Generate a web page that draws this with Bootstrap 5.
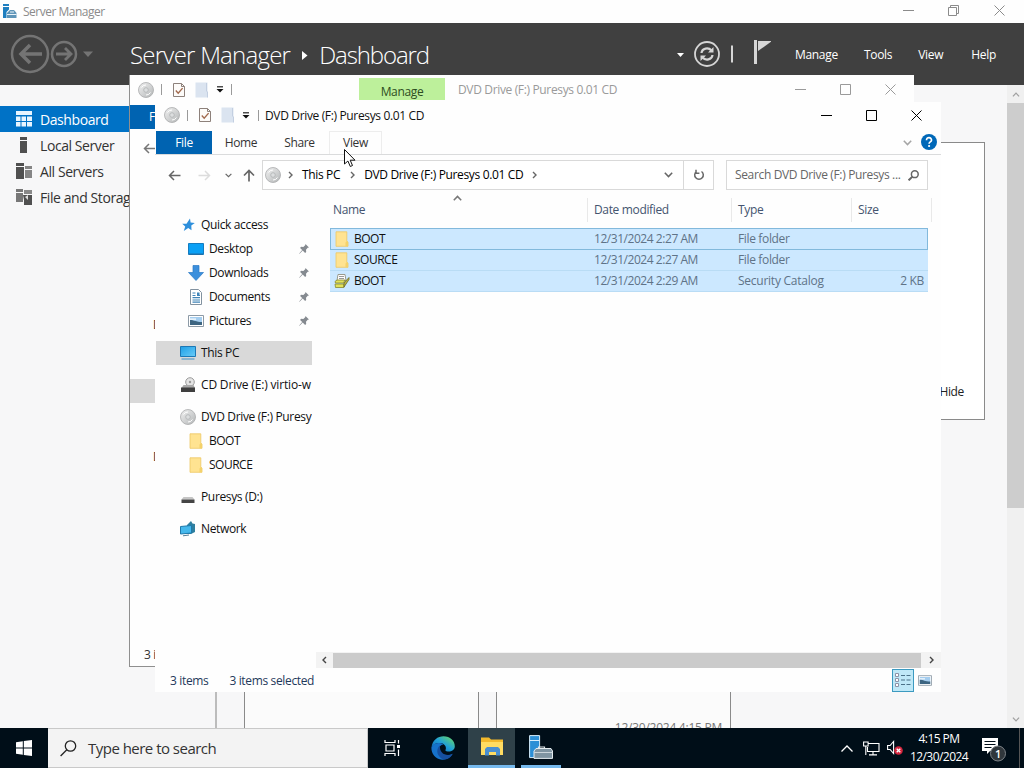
<!DOCTYPE html>
<html lang="en">
<head>
  <meta charset="UTF-8" />
  <meta name="viewport" content="width=device-width, initial-scale=1.0"/>
  <title>Server Manager</title>

  <!-- Bootstrap CSS -->
  <link href="https://cdn.jsdelivr.net/npm/bootstrap@5.3.0/dist/css/bootstrap.min.css" rel="stylesheet">

  <!-- Custom CSS -->
  <style>
    body {
      width: 1024px;
      height: 768px;
      overflow: hidden;
      font-family: "Open Sans", "Noto Sans", sans-serif;
      font-size: 12px;
      line-height: 16px;
      letter-spacing: -0.35px;
      color: #1b1b1b;
      background: #f7f7f8;
      white-space: nowrap;
    }
    svg { display: block; flex: none; }

    /* Server Manager */
    .sm-title { height: 23px; background: #fefefe; color: #8b8b8b; padding-left: 2px; letter-spacing: -0.5px; }
    .sm-controls { padding: 0 19px 3px 0; }
    .sm-header { height: 62px; background: #404040; color: #fff; padding: 0 28px 0 8px; }
    .sm-crumb {
      font-family: "Open Sans", sans-serif;
      font-weight: 300;
      font-size: 24px;
      letter-spacing: -0.9px;
      line-height: 32px;
      margin-left: 36px;
      padding-top: 2px;
    }
    .sm-menu { gap: 26px; margin-left: 24px; font-weight: 500; padding-top: 2px; letter-spacing: -0.3px; }
    .sm-body { height: 643px; }
    .sm-side { width: 215px; padding-top: 21px; font-size: 14px; letter-spacing: -0.42px; color: #333; }
    .side-item { height: 26px; padding-left: 15px; gap: 7px; }
    .side-item span { padding-top: 2px; }
    .side-item.active { background: #0072c6; color: #fff; }
    .sm-main { padding-top: 57px; }
    .welcome { width: 770px; height: 278px; background: #fff; border: 1px solid #8a8a8a; padding: 0 20px 19px 0; color: #222; }
    .tile { width: 235px; height: 60px; border: solid #8a8a8a; border-width: 0 1px; background: #fbfbfb; color: #777; }
    .tile span { margin-bottom: -8px; letter-spacing: -.25px; }
    .tile-edge { width: 29px; border-left: 2px solid #bcbcbc; }
    .sm-scroll { width: 17px; background: #f0f0f0; }
    .sm-thumb { height: 405px; background: #cdcdcd; margin-bottom: auto; }
    .scroll-arrow { height: 18px; color: #a0a0a0; }
    .flip-y { transform: scaleY(-1); }
    .flip-x { transform: scaleX(-1); }

    /* Explorer windows */
    .win { position: absolute; background: #fefefe; overflow: hidden; }
    .win-back { left: 129px; top: 75px; width: 785px; height: 592px; border: solid #8f8f8f; border-width: 0 0 1px 1px; color: #9a9a9a; }
    .win-front { left: 155px; top: 102px; width: 786px; height: 590px; }
    .back-bar { height: 29px; }
    .bar-sep { width: 1px; height: 11px; background: #9a9a9a; }
    .manage-tab { width: 86px; height: 22px; background: #bdf09b; color: #2d4d22; margin: 3px 13px 0 127px; padding-top: 6px; }
    .caption { height: 29px; padding: 0 0 3px 9px; color: #111; }
    .controls { gap: 34px; padding-right: 19px; }
    .win-back .controls { padding-right: 18px; }
    .ribbon { height: 24px; border-bottom: 1px solid #dadbdc; padding-left: 1px; }
    .ribbon > span { height: 23px; line-height: 24px; text-align: center; color: #333; }
    .file-tab { background: #0063b1; }
    .ribbon > .file-tab { color: #fff; }
    .ribbon > .view-tab { border: 1px solid #ededed; border-bottom: 0; line-height: 22px; }
    .nav-row { height: 40px; padding: 0 13px; color: #666; }
    .box { height: 30px; border: 1px solid #d9d9d9; background: #fff; }
    .tree { width: 157px; padding: 18px 0 0 1px; overflow: hidden; }
    .tree-item { height: 24px; padding-left: 24px; gap: 5px; color: #111; }
    .tree-item.sub { padding-left: 32px; }
    .tree-item.gap-top { margin-top: 8px; }
    .tree-item.current { background: #d9d9d9; }
    .tree-item .pin { margin-left: auto; margin-right: 3px; }
    .files { width: 629px; }
    .sort-mark { height: 3px; padding-left: 141px; color: #777; }
    .col-head { height: 30px; color: #44546f; padding-left: 15px; }
    .col-head > div { height: 24px; line-height: 24px; border-right: 1px solid #e9e9e9; padding-left: 6px; }
    .c-name { width: 261px; }
    .c-date { width: 144px; }
    .c-type { width: 120px; }
    .file-row { width: 598px; height: 21px; margin-left: 18px; background: #cce8ff; color: #5f7387; border-bottom: 1px solid #b9dcf5; }
    .file-row:first-child { border: 1px solid #82b9dc; height: 22px; }
    .file-row:first-child > .c-name { margin-left: -1px; }
    .file-row .c-name { color: #111; padding-left: 4px; gap: 4px; width: 258px; letter-spacing: -0.5px; }
    .file-row .c-date, .file-row .c-type { padding-left: 6px; }
    .file-row .c-date { letter-spacing: -0.45px; }
    .file-row .c-size { width: 76px; padding-right: 4px; }
    .hbar { height: 16px; width: 625px; background: #f3f3f3; margin-left: auto; color: #444; }
    .hthumb { width: 588px; height: 15px; background: #cbcbcb; }
    .status { height: 24px; padding: 0 9px 0 15px; color: #1e395b; }
    .status span { padding-top: 2px; }
    .view-on { width: 22px; height: 23px; background: #bfe8f7; border: 1px solid #3c9ac0; }

    /* Taskbar */
    .taskbar { position: absolute; left: 0; top: 728px; width: 1024px; height: 40px; background: #000e18; color: #fff; }
    .search { width: 320px; height: 40px; background: #f3f3f3; color: #333; font-size: 15px; letter-spacing: -0.52px; padding-left: 12px; gap: 11px; border: 1px solid #c9c9c9; border-left: 0; }
    .app { width: 48px; height: 40px; }
    .app-open { border-bottom: 3px solid #76b9ed; }
    .app-current { background: #2f4149; }
    .clock { width: 64px; line-height: 18px; letter-spacing: -0.55px; margin-left: 4px; }
    .show-desktop { width: 5px; height: 40px; border-left: 1px solid #555; }
    .pointer { position: absolute; left: 343px; top: 148px; }
  </style>
</head>
<body>

  <!-- Shared icons -->
  <svg width="0" height="0" class="position-absolute">
    <defs>
      <linearGradient id="gDisc" x1="0" y1="0" x2="1" y2="1">
        <stop offset="0" stop-color="#f1f1f1"/><stop offset="1" stop-color="#b4b7b8"/>
      </linearGradient>
      <linearGradient id="gEdge" x1="0" y1="1" x2="1" y2="0">
        <stop offset="0" stop-color="#0f5fb5"/><stop offset=".5" stop-color="#1f9fd8"/><stop offset="1" stop-color="#6fe05a"/>
      </linearGradient>
      <linearGradient id="gScreen" x1="0" y1="0" x2="1" y2="1">
        <stop offset="0" stop-color="#1e9fe6"/><stop offset="1" stop-color="#6accf8"/>
      </linearGradient>
    </defs>
    <symbol id="disc" viewBox="0 0 16 16">
      <circle cx="8" cy="8" r="7.5" fill="url(#gDisc)" stroke="#a9abac" stroke-width=".8"/>
      <path d="M3.5 5.5A5 5 0 0 1 8 3M12.5 10.5A5 5 0 0 1 8 13" fill="none" stroke="#fff" stroke-width="1"/>
      <circle cx="8" cy="8" r="2.3" fill="#dcdedf" stroke="#b0b3b4" stroke-width=".8"/>
    </symbol>
    <symbol id="props" viewBox="0 0 14 16">
      <path d="M1.5 1.5h8l3 3v10h-11z" fill="#fdfbf9" stroke="#8d817b"/>
      <path d="M9.5 1.5v3h3" fill="none" stroke="#8d817b"/>
      <path d="M3.8 8.5l2.4 2.6 4.4-5" fill="none" stroke="#a1694d" stroke-width="1.4"/>
    </symbol>
    <symbol id="newfolder" viewBox="0 0 13 16">
      <path d="M.5.5h12v15H.5z" fill="#dbe4f0"/><path d="M11.5 1v8l1 1v5.5" fill="none" stroke="#c3cfe1"/>
    </symbol>
    <symbol id="qat" viewBox="0 0 8 7">
      <path d="M1 .8h6" stroke="#222" stroke-width="1.2"/><path d="M.5 3h7L4 6.5z" fill="#111"/>
    </symbol>
    <symbol id="folder" viewBox="0 0 13 16">
      <path d="M.5.8h10.800v9l1.200 1.500v4H.5z" fill="#ffe391" stroke="#edc863" stroke-width=".8"/>
      <path d="M11.300 1v9l-1.300 1.500v3.800h2.500v-4l-1.200-1.500z" fill="#f4d26a"/>
    </symbol>
    <symbol id="pin" viewBox="0 0 10 10">
      <path d="M6.500 0L10 3.500l-1.300.3-1.700 1.900.2 2.300-1.100.9L3.700 6.500 .6 9.800.2 9.400 3.200 6 1.100 3.900l.9-1.100 2.300.2 1.900-1.700z" fill="#858a90"/>
    </symbol>
    <symbol id="photo" viewBox="0 0 16 12">
      <path d="M.5.5h15v11H.5z" fill="#fff" stroke="#8d9aa6"/>
      <path d="M2 2h12v8H2z" fill="#a4cdef"/><path d="M2 5c4 0 6 2 12 2v3H2z" fill="#3d6581"/><path d="M2 3.500h6v1.200H2z" fill="#fff"/>
    </symbol>
    <symbol id="min" viewBox="0 0 11 11"><path d="M0 5.500h11" stroke="currentColor"/></symbol>
    <symbol id="max" viewBox="0 0 11 11"><path d="M.5.5h10v10H.5z" fill="none" stroke="currentColor"/></symbol>
    <symbol id="close" viewBox="0 0 11 11"><path d="M.5.5l10 10M10.500.5l-10 10" stroke="currentColor"/></symbol>
    <symbol id="chev" viewBox="0 0 5 8"><path d="M1 1l3 3-3 3" fill="none" stroke="currentColor" stroke-width="1.400"/></symbol>
    <symbol id="chevdown" viewBox="0 0 9 6"><path d="M.8.8l3.700 3.800L8.200.8" fill="none" stroke="currentColor" stroke-width="1.500"/></symbol>
    <symbol id="back" viewBox="0 0 13 11"><path d="M12.500 5.500H1.500M6 1L1.500 5.500 6 10" fill="none" stroke="currentColor" stroke-width="1.500"/></symbol>
    <symbol id="server" viewBox="0 0 24 24">
      <path d="M.6.6h10v22H.6z" fill="#2c8fd6" stroke="#d8eefc"/><path d="M.6 5.500h10" stroke="#d8eefc"/>
      <path d="M9.500 14v-2h6v2" fill="none" stroke="#dfe6ea" stroke-width="1.200"/>
      <path d="M5 16l2-2.500h15l1.500 2.500v7.400H5z" fill="#8095a2" stroke="#e4ebef"/><path d="M5 17.500h18.500" stroke="#cbd5db"/>
    </symbol>
  </svg>

  <!-- Server Manager title bar -->
  <div class="sm-title d-flex align-items-center">
    <svg width="15" height="15" viewBox="0 0 15 15">
      <path d="M1 0h6v2H1zM1 3h6v2.500L4.500 8v6H1z" fill="#1f7fc0"/>
      <path d="M6 8l2-2h4l2.500 3v5H5V9z" fill="#5f95b8"/><path d="M5 10.500h9.500M8 8h4" stroke="#e9f2f8"/>
    </svg>
    <span style="margin-left: 6px">Server Manager</span>
    <div class="sm-controls d-flex align-items-center ms-auto">
      <svg width="11" height="11"><use href="#min"/></svg>
      <svg width="11" height="11" viewBox="0 0 11 11" style="margin: 0 35px 0 34px" fill="none" stroke="currentColor"><path d="M.5 2.500h8v8h-8zM2.500 2.500v-2h8v8h-2"/></svg>
      <svg width="11" height="11"><use href="#close"/></svg>
    </div>
  </div>

  <!-- Server Manager header -->
  <div class="sm-header d-flex align-items-center">
    <svg width="86" height="40" viewBox="0 0 86 40" fill="none" stroke="#747474">
      <circle cx="22" cy="20" r="18" stroke-width="2.500"/>
      <path d="M34 20H13M22 11l-9 9 9 9" stroke-width="3.500"/>
      <circle cx="56" cy="20" r="12" stroke-width="2.500"/>
      <path d="M48 20h14M57 14l6 6-6 6" stroke-width="2.800"/>
      <path d="M75 17.500h10L80 23z" fill="#747474" stroke="none"/>
    </svg>
    <div class="sm-crumb d-flex align-items-center">
      <span style="letter-spacing: -0.75px">Server Manager</span>
      <svg width="6" height="9" viewBox="0 0 6 9" style="margin: 0 11px 0 12px"><path d="M0 0l5.500 4.500L0 9z" fill="#fff"/></svg>
      <span style="letter-spacing: -1.1px">Dashboard</span>
    </div>
    <svg width="96" height="30" viewBox="0 0 96 30" class="ms-auto" fill="none" stroke="#d6d6d6">
      <path d="M2 14h7l-3.500 4z" fill="#fff" stroke="none"/>
      <circle cx="32" cy="15" r="12" stroke-width="1.800"/>
      <path d="M26.500 14c.5-5 7-6 10-2.500M37.500 16c-.5 5-7 6-10 2.500" stroke-width="2.200"/>
      <path d="M38.500 8v5.500H33zM25.500 22v-5.500H31z" fill="#d6d6d6" stroke="none"/>
      <path d="M57 6.500v17" stroke-width="2"/>
      <path d="M80.500 1v24" stroke-width="3"/>
      <path d="M83 2h14L83 12z" fill="#d6d6d6" stroke="none"/>
    </svg>
    <div class="sm-menu d-flex">
      <span>Manage</span><span>Tools</span><span>View</span><span style="margin-left: 2px">Help</span>
    </div>
  </div>

  <!-- Server Manager body -->
  <div class="sm-body d-flex">
    <div class="sm-side flex-shrink-0">
      <div class="side-item active d-flex align-items-center">
        <svg width="18" height="16" viewBox="0 0 18 16"><path d="M1 0h16v4H1zM1 5.500h4.500V10H1zM6.500 5.500H11V10H6.500zM12 5.500h5V10h-5zM1 11h4.500v4.500H1zM6.500 11H11v4.500H6.500zM12 11h5v4.500h-5z" fill="#e8f5ff"/></svg>
        <span>Dashboard</span>
      </div>
      <div class="side-item d-flex align-items-center">
        <svg width="18" height="16" viewBox="0 0 18 16"><path d="M5 0h7v3H5zM5 4h7v12H5z" fill="#505050"/></svg>
        <span>Local Server</span>
      </div>
      <div class="side-item d-flex align-items-center">
        <svg width="18" height="16" viewBox="0 0 18 16"><path d="M1 0h8v3H1zM1 4h8v12H1z" fill="#505050"/><path d="M10 3h7v3h-7zM10 7h7v8h-7z" fill="#858585"/></svg>
        <span>All Servers</span>
      </div>
      <div class="side-item d-flex align-items-center">
        <svg width="18" height="16" viewBox="0 0 18 16"><path d="M1 0h7v3H1zM1 4h7v9H1z" fill="#777"/><path d="M9 1h8v4H9z" fill="#888"/><path d="M8 6h9v10H9v-5z" fill="#505050"/><path d="M10 8l3-2v5z" fill="#ddd"/></svg>
        <span>File and Storage Services</span>
      </div>
    </div>
    <div class="sm-main flex-grow-1 d-flex flex-column">
      <div class="welcome d-flex align-items-end justify-content-end"><span>Hide</span></div>
      <div class="d-flex mt-auto">
        <div class="tile-edge"></div>
        <div class="tile"></div>
        <div style="width: 17px"></div>
        <div class="tile d-flex align-items-end justify-content-end pe-2"><span>12/30/2024 4:15 PM</span></div>
      </div>
    </div>
    <div class="sm-scroll d-flex flex-column align-items-center">
      <div class="scroll-arrow d-flex align-items-center"><svg width="8" height="5" class="flip-y"><use href="#chevdown"/></svg></div>
      <div class="sm-thumb w-100"></div>
      <div class="scroll-arrow d-flex align-items-center"><svg width="8" height="5"><use href="#chevdown"/></svg></div>
    </div>
  </div>

  <!-- Explorer window behind -->
  <div class="win win-back d-flex flex-column">
    <div class="back-bar d-flex align-items-center flex-shrink-0">
      <svg width="16" height="16" style="margin-left: 8px"><use href="#disc"/></svg>
      <div class="bar-sep" style="margin: 0 10px 0 7px"></div>
      <svg width="14" height="16"><use href="#props"/></svg>
      <svg width="13" height="16" style="margin: 0 8px 0 9px"><use href="#newfolder"/></svg>
      <svg width="8" height="7"><use href="#qat"/></svg>
      <div class="bar-sep" style="margin-left: 7px"></div>
      <div class="manage-tab text-center align-self-start">Manage</div>
      <span>DVD Drive (F:) Puresys 0.01 CD</span>
      <div class="controls d-flex ms-auto">
        <svg width="11" height="11"><use href="#min"/></svg>
        <svg width="11" height="11"><use href="#max"/></svg>
        <svg width="11" height="11"><use href="#close"/></svg>
      </div>
    </div>
    <div class="file-tab text-white" style="width: 56px; height: 24px; padding: 4px 0 0 19px; margin-top: 1px">File</div>
    <div style="padding: 14px 0 0 13px; color: #777"><svg width="13" height="11"><use href="#back"/></svg></div>
    <div style="padding: 163px 0 0 23px; color: #333">Documents</div>
    <div style="background: #d9d9d9; height: 24px; width: 26px; margin-top: 46px"></div>
    <div style="padding: 46px 0 0 23px; color: #333">DVD Drive</div>
    <div class="mt-auto" style="padding: 0 0 3px 14px; color: #333">3 items</div>
  </div>

  <!-- Explorer window in front -->
  <div class="win win-front d-flex flex-column">
    <div class="caption d-flex align-items-center flex-shrink-0">
      <svg width="16" height="16"><use href="#disc"/></svg>
      <div class="bar-sep" style="margin: 0 10px 0 7px"></div>
      <svg width="14" height="16"><use href="#props"/></svg>
      <svg width="13" height="16" style="margin: 0 8px 0 9px"><use href="#newfolder"/></svg>
      <svg width="8" height="7"><use href="#qat"/></svg>
      <div class="bar-sep" style="margin: 0 6px 0 8px"></div>
      <span style="padding-top: 2px">DVD Drive (F:) Puresys 0.01 CD</span>
      <div class="controls d-flex ms-auto text-black">
        <svg width="11" height="11"><use href="#min"/></svg>
        <svg width="11" height="11"><use href="#max"/></svg>
        <svg width="11" height="11"><use href="#close"/></svg>
      </div>
    </div>
    <div class="ribbon d-flex flex-shrink-0">
      <span class="file-tab" style="width: 56px">File</span>
      <span style="width: 58px">Home</span>
      <span style="width: 59px">Share</span>
      <span class="view-tab" style="width: 53px">View</span>
      <div class="d-flex align-items-center ms-auto pe-1" style="color: #a5a5a5">
        <svg width="9" height="6"><use href="#chevdown"/></svg>
        <svg width="16" height="16" viewBox="0 0 16 16" style="margin: 0 0 2px 9px">
          <circle cx="8" cy="8" r="8" fill="#0068b8"/>
          <path d="M5.500 6.200c0-3.600 5.200-3.300 5 0-.1 1.800-2.400 1.700-2.400 3.600" fill="none" stroke="#fff" stroke-width="1.700"/><circle cx="8.100" cy="12" r="1.100" fill="#fff"/>
        </svg>
      </div>
    </div>
    <div class="nav-row d-flex align-items-center flex-shrink-0">
      <svg width="13" height="11"><use href="#back"/></svg>
      <svg width="13" height="11" class="flip-x" style="margin-left: 17px; color: #dcdcdc"><use href="#back"/></svg>
      <svg width="7" height="5" style="margin-left: 14px"><use href="#chevdown"/></svg>
      <svg width="12" height="13" viewBox="0 0 12 13" style="margin-left: 11px" fill="none" stroke="currentColor" stroke-width="1.700"><path d="M6 12.500V1.500M1 6.500l5-5 5 5"/></svg>
      <div class="box d-flex align-items-center" style="width: 452px; margin-left: 7px; padding-left: 2px">
        <svg width="16" height="16"><use href="#disc"/></svg>
        <svg width="5" height="8" style="margin: 0 9px 0 7px"><use href="#chev"/></svg>
        <span class="text-black">This PC</span>
        <svg width="5" height="8" style="margin: 0 9px 0 10px"><use href="#chev"/></svg>
        <span class="text-black">DVD Drive (F:) Puresys 0.01 CD</span>
        <svg width="5" height="8" style="margin-left: 9px"><use href="#chev"/></svg>
        <svg width="9" height="6" class="ms-auto" style="margin-right: 10px"><use href="#chevdown"/></svg>
        <div class="h-100 d-flex align-items-center justify-content-center" style="width: 30px; border-left: 1px solid #d9d9d9">
          <svg width="12" height="12" viewBox="0 0 12 12" fill="none" stroke="currentColor" stroke-width="1.500"><path d="M8.500 2.500a4.300 4.300 0 1 1-5 0M3 .8v3.400h3.400"/></svg>
        </div>
      </div>
      <div class="box d-flex align-items-center px-2" style="width: 202px; margin-left: 12px">
        <span>Search DVD Drive (F:) Puresys ...</span>
        <svg width="11" height="11" viewBox="0 0 11 11" class="ms-auto" fill="none" stroke="currentColor"><circle cx="6.800" cy="4.200" r="3.400" stroke-width="1.500"/><path d="M4.400 6.600L.6 10.400" stroke-width="2"/></svg>
      </div>
    </div>

    <div class="d-flex flex-grow-1">
      <!-- Navigation tree -->
      <div class="tree flex-shrink-0">
        <div class="tree-item d-flex align-items-center">
          <svg width="16" height="14" viewBox="0 0 16 14"><path d="M10 .5l.6 4 4.200.5-3.500 2.500.2 4.700-3.300-2.200-4.400 3 1.400-4.500-3-2.700h4.300z" fill="#2e8fdb"/></svg>
          <span>Quick access</span>
        </div>
        <div class="tree-item sub d-flex align-items-center">
          <svg width="16" height="14" viewBox="0 0 16 14"><path d="M.5 1.500h15v11H.5z" fill="#0aa0f5" stroke="#147cc0"/><path d="M1 11.500h14v1.500H1z" fill="#1f6fa8"/></svg>
          <span>Desktop</span><svg width="10" height="10" class="pin"><use href="#pin"/></svg>
        </div>
        <div class="tree-item sub d-flex align-items-center">
          <svg width="16" height="16" viewBox="0 0 16 16"><path d="M5 .5h6v7h4.500L8 15.500.5 7.500H5z" fill="#3b8fdc" stroke="#2a78c4" stroke-width=".7"/></svg>
          <span>Downloads</span><svg width="10" height="10" class="pin"><use href="#pin"/></svg>
        </div>
        <div class="tree-item sub d-flex align-items-center">
          <svg width="16" height="16" viewBox="0 0 16 16"><path d="M2.500.5h8l3 3v12h-11z" fill="#fff" stroke="#8292a0"/><path d="M4.500 4h3M4.500 6.500h3M9 6.500h3M4.500 8.700h7.500M4.500 11h7.500M4.500 13.200h7.500" stroke="#3f84b8" stroke-width="1.200"/><path d="M9 3.500h2.500V6H9z" fill="#3f84b8"/></svg>
          <span>Documents</span><svg width="10" height="10" class="pin"><use href="#pin"/></svg>
        </div>
        <div class="tree-item sub d-flex align-items-center">
          <svg width="16" height="12"><use href="#photo"/></svg>
          <span>Pictures</span><svg width="10" height="10" class="pin"><use href="#pin"/></svg>
        </div>
        <div class="tree-item gap-top current d-flex align-items-center">
          <svg width="16" height="14" viewBox="0 0 16 14"><path d="M.5.5h15v10H.5z" fill="url(#gScreen)" stroke="#1d78b5"/><path d="M1.500 12.500h13v1h-13z" fill="#3b8fc4"/></svg>
          <span>This PC</span>
        </div>
        <div class="tree-item gap-top d-flex align-items-center">
          <svg width="16" height="16" viewBox="0 0 16 16"><circle cx="10" cy="5" r="4.300" fill="#e4e4e4" stroke="#9c9c9c"/><circle cx="10" cy="5" r="1.200" fill="#999"/><path d="M3.500 8h10l1.500 3H1.500z" fill="#a9a9a9"/><path d="M1 10.500h14V15H1z" fill="#3f3f3f"/></svg>
          <span style="letter-spacing: -0.17px">CD Drive (E:) virtio-w</span>
        </div>
        <div class="tree-item gap-top d-flex align-items-center">
          <svg width="16" height="16"><use href="#disc"/></svg>
          <span>DVD Drive (F:) Puresy</span>
        </div>
        <div class="tree-item sub d-flex align-items-center">
          <svg width="16" height="16"><use href="#folder"/></svg>
          <span style="letter-spacing: -0.5px">BOOT</span>
        </div>
        <div class="tree-item sub d-flex align-items-center">
          <svg width="16" height="16"><use href="#folder"/></svg>
          <span style="letter-spacing: -0.5px">SOURCE</span>
        </div>
        <div class="tree-item gap-top d-flex align-items-center">
          <svg width="16" height="16" viewBox="0 0 16 16"><path d="M3.500 8h9l2 2.500h-13z" fill="#c5c5c5"/><path d="M1.500 10.500h13V14h-13z" fill="#444"/></svg>
          <span>Puresys (D:)</span>
        </div>
        <div class="tree-item gap-top d-flex align-items-center">
          <svg width="16" height="16" viewBox="0 0 16 16"><path d="M7 4l4-4 1.500 2.500L15 3v8l-4 2H7z" fill="#2f7f9f"/><path d="M.5 5.500l11-1v7.500l-11 1z" fill="#45b8ec" stroke="#1f79ab"/><path d="M3 14.800l6-.8" stroke="#557f98"/></svg>
          <span>Network</span>
        </div>
      </div>

      <!-- File list -->
      <div class="files">
        <div class="sort-mark"><svg width="9" height="6" class="flip-y"><use href="#chevdown"/></svg></div>
        <div class="col-head d-flex">
          <div class="c-name">Name</div>
          <div class="c-date">Date modified</div>
          <div class="c-type">Type</div>
          <div style="width: 80px">Size</div>
        </div>
        <div>
          <div class="file-row d-flex align-items-center">
            <div class="c-name d-flex align-items-center"><svg width="16" height="16"><use href="#folder"/></svg>BOOT</div>
            <div class="c-date">12/31/2024 2:27 AM</div><div class="c-type">File folder</div>
          </div>
          <div class="file-row d-flex align-items-center">
            <div class="c-name d-flex align-items-center"><svg width="16" height="16"><use href="#folder"/></svg>SOURCE</div>
            <div class="c-date">12/31/2024 2:27 AM</div><div class="c-type">File folder</div>
          </div>
          <div class="file-row d-flex align-items-center">
            <div class="c-name d-flex align-items-center">
              <svg width="16" height="16" viewBox="0 0 16 16"><path d="M4 1.500h7l1 6H3z" fill="#fff" stroke="#9a9a8c"/><path d="M5 3.500h5M5 5.500h5" stroke="#999"/><path d="M1 8.500l2-1.500h8l-1.500 3H1.500zM1 11h9v3.500H1.500z" fill="#e2e25a" stroke="#87872e" stroke-width=".8"/><path d="M10 14l5-7.500V4.500L10 10z" fill="#bdb53b" stroke="#6a6a2c" stroke-width=".8"/></svg>BOOT
            </div>
            <div class="c-date">12/31/2024 2:29 AM</div><div class="c-type" style="letter-spacing: -0.25px">Security Catalog</div><div class="c-size text-end">2 KB</div>
          </div>
        </div>
      </div>
    </div>

    <div class="hbar d-flex align-items-center flex-shrink-0">
      <svg width="5" height="8" class="flip-x" style="margin: 0 6px"><use href="#chev"/></svg>
      <div class="hthumb"></div>
      <svg width="5" height="8" style="margin-left: 8px"><use href="#chev"/></svg>
    </div>
    <div class="status d-flex align-items-center flex-shrink-0">
      <span>3 items</span><span style="margin-left: 21px">3 items selected</span>
      <div class="view-on ms-auto d-flex align-items-center justify-content-center">
        <svg width="16" height="14" viewBox="0 0 16 14" fill="none"><path d="M.5.5h3v3h-3zM.5 5.500h3v3h-3zM.5 10.500h3v3h-3z" fill="#fff" stroke="#8d93a8"/><path d="M6 2.500h4M11.500 2.500h4M6 7h4M11.500 7h4M6 11.500h4M11.500 11.500h4" stroke="#4b7187"/></svg>
      </div>
      <svg width="14" height="11" style="margin-left: 4px"><use href="#photo"/></svg>
    </div>
  </div>

  <svg class="pointer" width="13" height="20" viewBox="0 0 13 20"><path d="M1.500 1.500v14.500l3.400-3 2.400 5.500 2.200-1-2.300-5.300H12z" fill="#fff" stroke="#111"/></svg>

  <!-- Taskbar -->
  <div class="taskbar d-flex align-items-center">
    <div class="app d-flex align-items-center justify-content-center">
      <svg width="16" height="16" viewBox="0 0 16 16"><path d="M0 2.200L6.800 1.200v6.300H0zM7.800 1.100L16 0v7.500H7.800zM0 8.500h6.800v6.300L0 13.800zM7.800 8.500H16V16l-8.200-1.100z" fill="#fff"/></svg>
    </div>
    <div class="search d-flex align-items-center">
      <svg width="17" height="17" viewBox="0 0 17 17" fill="none" stroke="#222" stroke-width="1.300"><circle cx="10.500" cy="6" r="5.200"/><path d="M6.800 9.800L.6 16"/></svg>
      <span>Type here to search</span>
    </div>
    <div class="app d-flex align-items-center justify-content-center">
      <svg width="17" height="16" viewBox="0 0 17 16" fill="none" stroke="#fff" stroke-width="1.200"><path d="M1 0v2.500h10V0M1 16v-2.500h10V16M2 5h8v6H2zM14.500 0v3.500M14.500 9.500V16"/><path d="M13 5h3v3h-3z" fill="#fff" stroke="none"/></svg>
    </div>
    <div class="app d-flex align-items-center justify-content-center" style="width: 52px; padding-left: 2px">
      <svg width="24" height="24" viewBox="0 0 24 24">
        <path d="M.5 12C1 4 7 .2 12.500.2 19 .2 24 5 23.800 10.500c-.2 4-4.500 5.700-8.300 4.700-1.800-.6-.6-1.400-.6-3C14.900 9 12 7 8.500 7 4.500 7 1.500 9 .5 12z" fill="url(#gEdge)"/>
        <path d="M.4 11.500C2 8 5 6.800 8.200 7c3 .2 4.300 1.500 4.300 1.500C8 9 7.500 13 9 15.800c2.500 4.500 8 4.800 12.500 2C19 22.500 14.500 24 11 23.700 4.500 23.200.2 18 .4 11.500z" fill="#1672cb"/>
        <path d="M9 9.500C3.500 14 7 22 13 23.500c4 .2 7-2.500 8.700-5.700-6 3-13.500.2-12.700-8.300z" fill="#164f9f"/>
      </svg>
    </div>
    <div class="app app-open app-current d-flex align-items-center justify-content-center" style="width: 47px">
      <svg width="22" height="19" viewBox="0 0 22 19"><path d="M0 .5h8l2 2h12V18H0z" fill="#f3b92c"/><path d="M0 5h22v13H0z" fill="#ffdc62"/><path d="M4 18.500V12l2-2h11l2 2v6.500h-4V15H8v3.500z" fill="#4a8fd0"/></svg>
    </div>
    <div class="app app-open d-flex align-items-center justify-content-center" style="width: 40px; margin-left: 6px">
      <svg width="24" height="24"><use href="#server"/></svg>
    </div>
    <div class="d-flex align-items-center ms-auto">
      <svg width="12" height="7" viewBox="0 0 12 7" fill="none" stroke="#fff" stroke-width="1.300"><path d="M.5 6.500L6 1l5.500 5.500"/></svg>
      <svg width="17" height="15" viewBox="0 0 17 15" style="margin-left: 10px" fill="none" stroke="#fff" stroke-width="1.100"><path d="M5.500 2.500h10.500v8H4.500V6M10 10.500v3M6 13.900h8M.6 1h4.500v4H.6zM2.800 5v9"/></svg>
      <svg width="16" height="16" viewBox="0 0 16 16" style="margin-left: 7px"><path d="M.6 5.500h2.500l3.500-4v12l-3.500-4H.6z" fill="none" stroke="#fff" stroke-width="1.100"/><circle cx="11.500" cy="10.500" r="4.300" fill="#d5253d"/><path d="M9.700 8.700l3.600 3.600M13.300 8.700l-3.600 3.600" stroke="#fff" stroke-width="1.300"/></svg>
      <div class="clock text-center"><div>4:15 PM</div><div>12/30/2024</div></div>
      <svg width="26" height="26" viewBox="0 0 26 26" style="margin: 2px 12px 0 10px">
        <path d="M1 2h16v13H9l-3 3v-3H1z" fill="#fff"/><path d="M3.500 5.500h11M3.500 8.500h11M3.500 11.500h7" stroke="#000e18"/>
        <circle cx="17" cy="17.500" r="7.500" fill="#30373c" stroke="#7d8388"/>
        <text x="17" y="21.500" text-anchor="middle" font-size="11" font-weight="600" fill="#fff">1</text>
      </svg>
      <div class="show-desktop"></div>
    </div>
  </div>

  <!-- Bootstrap JS -->
  <script src="https://cdn.jsdelivr.net/npm/bootstrap@5.3.0/dist/js/bootstrap.bundle.min.js"></script>
</body>
</html>
